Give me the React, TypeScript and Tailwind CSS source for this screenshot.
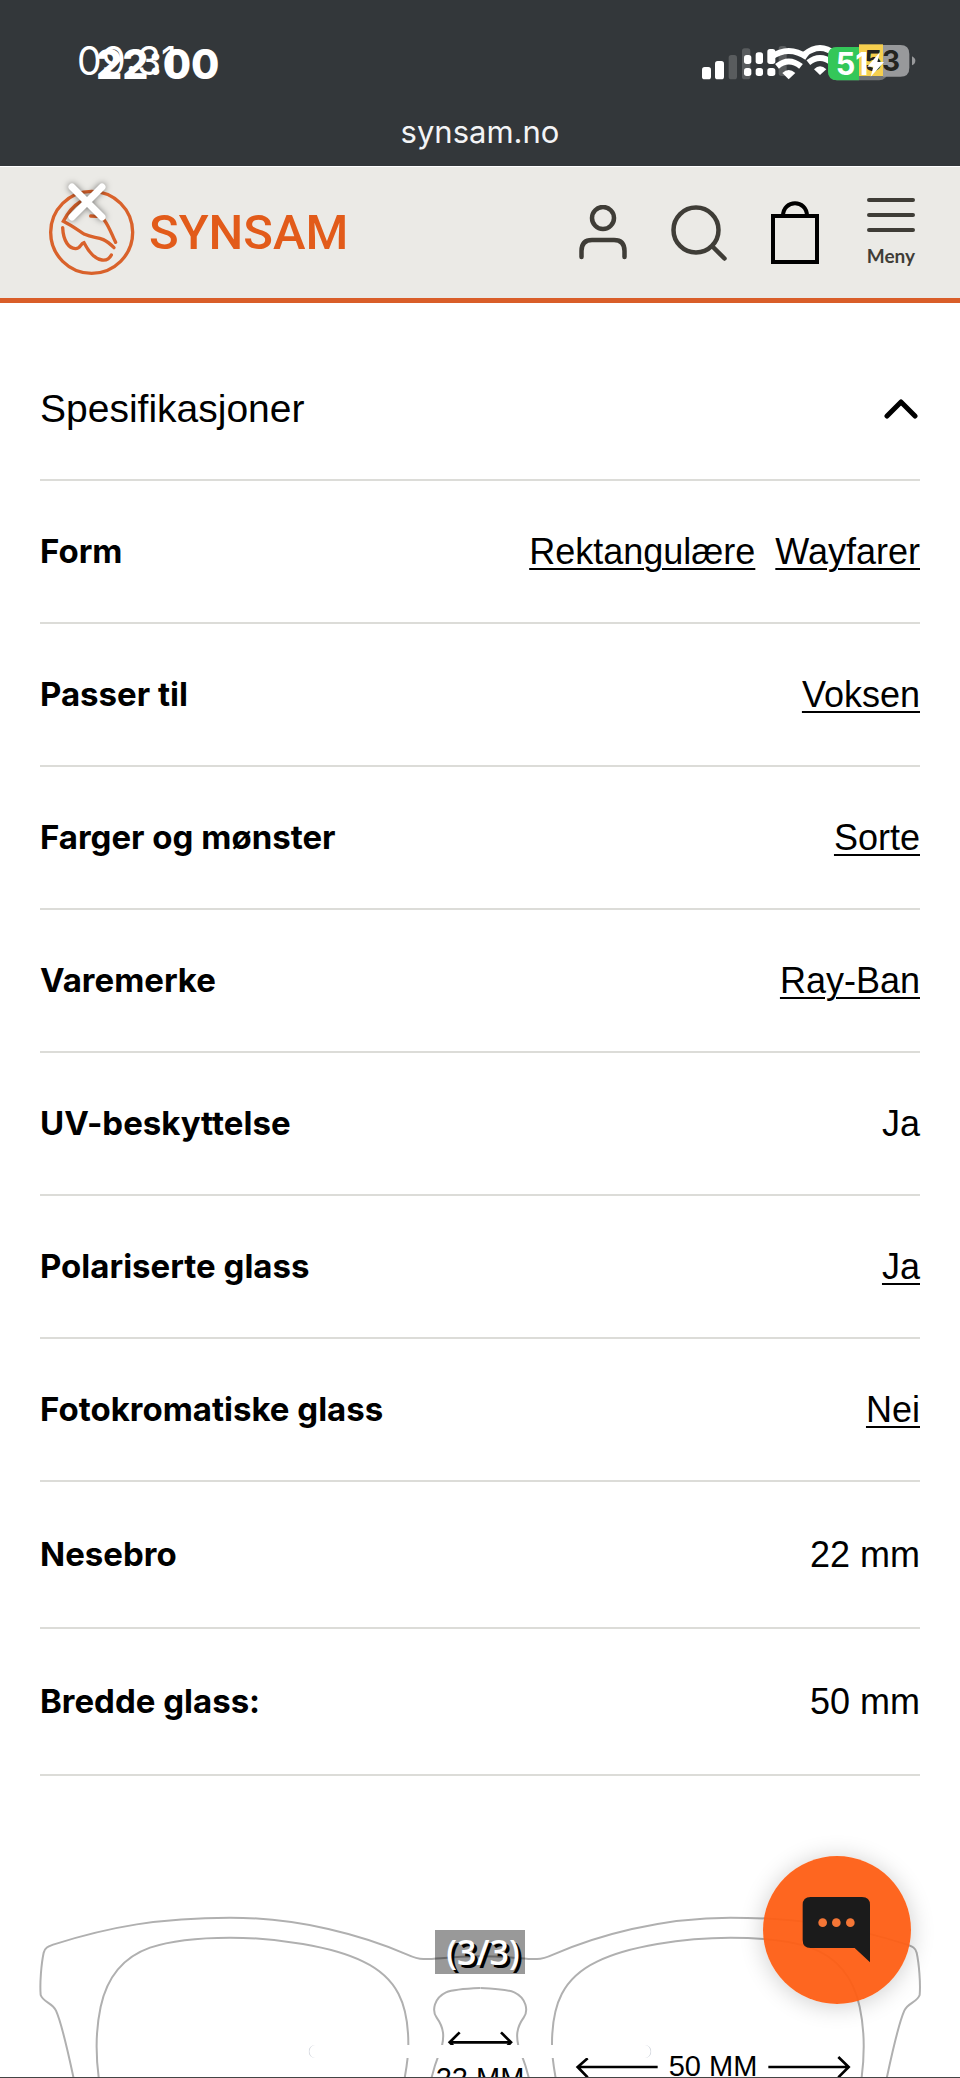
import { useState, type ReactNode } from "react";

type Spec = {
  label: string;
  values: string[];
  link?: boolean;
  tall?: boolean;
};

const specs: Spec[] = [
  { label: "Form", values: ["Rektangulære", "Wayfarer"], link: true },
  { label: "Passer til", values: ["Voksen"], link: true },
  { label: "Farger og mønster", values: ["Sorte"], link: true },
  { label: "Varemerke", values: ["Ray-Ban"], link: true },
  { label: "UV-beskyttelse", values: ["Ja"] },
  { label: "Polariserte glass", values: ["Ja"], link: true },
  { label: "Fotokromatiske glass", values: ["Nei"], link: true },
  { label: "Nesebro", values: ["22 mm"], tall: true },
  { label: "Bredde glass:", values: ["50 mm"], tall: true },
];

function StatusIcons() {
  return (
    <svg className="w-[220px] h-[43px]" viewBox="120 60 660 129" aria-hidden="true">
      {/* Signal */}
      <g fill="#595c5e">
        <rect x="206" y="105" width="25" height="73" rx="8" />
        <rect x="246" y="85" width="25" height="93" rx="8" />
        <rect x="356" y="78" width="24" height="90" rx="8" />
      </g>
      <g fill="#fff">
        <rect x="126" y="141" width="27" height="37" rx="8" />
        <rect x="165" y="123" width="27" height="55" rx="8" />
        <rect x="252" y="105" width="22" height="27" rx="8" />
        <rect x="287" y="97" width="22" height="35" rx="8" />
        <rect x="322" y="87" width="24" height="45" rx="8" />
        <rect x="252" y="144" width="22" height="24" rx="8" />
        <rect x="287" y="144" width="22" height="24" rx="8" />
        <rect x="322" y="144" width="24" height="24" rx="8" />
      </g>

      {/* Wifi */}
      <g fill="none" stroke="#fff" strokeWidth="18">
        <path d="M434 103 Q480 65 526 103" />
        <path d="M445 128 Q480 100 515 128" />
        <path d="M332 112 Q386 74 441 112" />
        <path d="M351 139 Q386 110 423 139" />
      </g>
      <path d="M386 178 L367 159 Q386 141 406 159 Z" fill="#fff" />
      <path d="M480 165 L462 148 Q480 130 499 148 Z" fill="#fff" />

      {/* Batteries */}
      <rect x="504" y="81" width="180" height="100" rx="27" fill="#717375" />
      <path d="M597 81 H531 Q504 81 504 108 V154 Q504 181 531 181 H597 Z" fill="#34c759" />
      <path d="M669 75 H721 Q748 75 748 102 V143 Q748 170 721 170 H669 Z" fill="#98999b" />
      <rect x="597" y="73" width="72" height="95" fill="#f6cf4e" />
      <path d="M756 109 Q766 114 766 122 Q766 131 756 136 Z" fill="#98999b" />
      <text x="612" y="152" fontSize="84" fontWeight="700" fontFamily="Inter, sans-serif" fill="#24241f">
        53
      </text>
      <text x="527" y="165" fontSize="92" fontWeight="700" fontFamily="Inter, sans-serif" fill="#fff">
        51
      </text>
      <path d="M660 96 L622 140 H640 L632 170 L672 126 H652 Z" fill="#fff" />
    </svg>
  );
}

function LogoMark() {
  return (
    <svg className="size-[87px]" viewBox="144 564 261 261" fill="none" stroke="#d9622b" strokeWidth="10" strokeLinecap="round" aria-hidden="true">
      <circle cx="275" cy="694" r="123" />
      <path d="M240 603 C222 614 204 634 190 661 C212 672 232 686 254 700 C288 716 302 700 342 740" />
      <path d="M272 645 L290 646 M312 656 C330 680 336 704 347 724" />
      <path d="M188 680 C190 722 207 742 226 743 C242 744 240 728 252 725 C262 744 280 774 306 777 C322 779 330 770 334 762" />
    </svg>
  );
}

function NavButton({ label, children }: { label: string; children: ReactNode }) {
  return (
    <button type="button" aria-label={label} className="flex cursor-pointer">
      {children}
    </button>
  );
}

function GlassesHalf() {
  return (
    <>
      <path d="M222 720 C203 630 185 550 168 512 C157 487 130 488 122 465 C119 430 124 370 131 338 C135 320 150 318 162 313 C330 260 480 233 690 233 C900 233 1090 287 1220 343 C1240 352 1252 357 1270 357 C1310 358 1340 350 1440 349" />
      <path d="M297 720 C286 640 288 565 302 500 C325 395 385 346 450 323 C520 299 600 293 690 293 C830 293 1000 320 1090 365 C1190 413 1226 490 1225 617 C1225 655 1218 690 1213 720" />
      <path d="M1440 444 C1390 446 1355 450 1338 457 C1302 474 1295 512 1310 533 C1333 565 1332 590 1326 617 C1320 640 1308 655 1293 720" />
    </>
  );
}

function GlassesDiagram() {
  return (
    <svg className="mt-[62px] w-full h-auto shrink-0" viewBox="0 -6 2880 720" role="img" aria-label="Brillemål">
      <g fill="none" stroke="#b0b0b0" strokeWidth="6">
        <GlassesHalf />
        <g transform="translate(2881 0) scale(-1 1)">
          <GlassesHalf />
        </g>
      </g>
      <g fill="none" stroke="#000" strokeWidth="8">
        <path d="M1350 607 H1532 M1379 577 L1349 607 L1379 637 M1503 577 L1533 607 L1503 637" />
        <path d="M1732 681 H1973 M1763 655 L1733 681 L1763 712 M2305 681 H2545 M2515 651 L2546 681 L2515 712" />
      </g>
      <g fill="#000" fontSize="87" fontFamily="'Liberation Sans', Arial, sans-serif" textAnchor="middle">
        <text x="1440" y="745">22 MM</text>
        <text x="2139" y="708">50 MM</text>
      </g>
    </svg>
  );
}

export default function App() {
  const [open, setOpen] = useState(true);

  return (
    <div className="relative flex h-screen flex-col overflow-hidden bg-white text-black font-['Liberation_Sans',Arial,sans-serif]">
      {/* Status bar */}
      <div className="relative shrink-0 bg-[#33373a] pt-10 text-white font-[Inter,sans-serif]">
        <span className="absolute left-[77px] top-[37px] text-[39px] leading-[48px]">09:31</span>
        <span className="absolute left-24 top-10 text-[41px] leading-[48px] font-extrabold">22:00</span>
        <div className="flex justify-end pr-10">
          <StatusIcons />
        </div>
        <p className="pt-[25px] pb-2.5 text-center text-[31px] leading-[48px] text-gray-100">synsam.no</p>
      </div>

      {/* Site header */}
      <header className="flex shrink-0 items-center justify-between border-t border-b-[5px] border-t-white border-b-[#d95e29] bg-[#ebeae6] py-[22px] pr-[45px] pl-12 text-[#3f3d37]">
        <a href="#" aria-label="Synsam" className="flex items-center gap-3.5">
          <LogoMark />
          <span className="text-[49px] leading-none font-medium text-[#e25b1a] font-[Roboto,sans-serif]">SYNSAM</span>
        </a>
        <nav className="flex items-center gap-11">
          <NavButton label="Min side">
            <svg className="w-12 h-[55px]" viewBox="0 0 48 55" fill="none" stroke="currentColor" strokeWidth="4.5" strokeLinecap="round">
              <circle cx="24" cy="13" r="11" />
              <path d="M2.5 52 V46 Q2.5 35 13 35 H35 Q45.5 35 45.5 46 V52" />
            </svg>
          </NavButton>
          <NavButton label="Søk">
            <svg className="size-14" viewBox="0 0 56 56" fill="none" stroke="currentColor" strokeWidth="4.5" strokeLinecap="round">
              <circle cx="25" cy="25" r="22.5" />
              <path d="M42 42 L53.5 53.5" />
            </svg>
          </NavButton>
          <NavButton label="Handlekurv">
            <svg className="w-12 h-[63px]" viewBox="0 0 48 63" fill="none" stroke="#000" strokeWidth="4">
              <rect x="2" y="15" width="44" height="46" />
              <path d="M12 15 C12 -2 36 -2 36 15" />
            </svg>
          </NavButton>
          <button type="button" className="ml-1 flex cursor-pointer flex-col items-center gap-3">
            <svg className="w-12 h-[34px]" viewBox="0 0 48 34" fill="none" stroke="currentColor" strokeWidth="4" strokeLinecap="round" aria-hidden="true">
              <path d="M2 2 H46 M2 17 H46 M2 32 H46" />
            </svg>
            <span className="text-[19px] leading-6 font-bold font-[Lato,sans-serif]">Meny</span>
          </button>
        </nav>
      </header>

      {/* Specifications */}
      <main className="shrink-0 px-10 pt-8">
        <h2 className="border-b-2 border-[#dcdcd8]">
          <button
            type="button"
            aria-expanded={open}
            onClick={() => setOpen(!open)}
            className="flex w-full cursor-pointer items-center justify-between pt-[50px] pb-[46px] pr-0.5 text-[39px] leading-[48px]"
          >
            Spesifikasjoner
            <svg className="w-[34px] h-5" viewBox="0 0 34 20" fill="none" stroke="currentColor" strokeWidth="5" strokeLinecap="round" strokeLinejoin="round" aria-hidden="true">
              <path d="M3 17 L17 3 L31 17" />
            </svg>
          </button>
        </h2>
        {open && (
          <dl>
            {specs.map((spec) => (
              <div
                key={spec.label}
                className={`flex items-center justify-between border-b-2 border-[#dcdcd8] py-12 ${spec.tall ? "leading-[49px]" : "leading-[45px]"}`}
              >
                <dt className="text-[33px] font-bold font-[Inter,sans-serif]">{spec.label}</dt>
                <dd className="flex gap-5 text-[36px]">
                  {spec.values.map((value) =>
                    spec.link ? (
                      <a key={value} href="#" className="underline decoration-2 underline-offset-4">
                        {value}
                      </a>
                    ) : (
                      <span key={value}>{value}</span>
                    )
                  )}
                </dd>
              </div>
            ))}
          </dl>
        )}
      </main>

      <GlassesDiagram />

      {/* Viewer controls on top of the page */}
      <button type="button" aria-label="Lukk" className="absolute left-[66px] top-[181px] cursor-pointer drop-shadow-[0_0_3px_rgba(0,0,0,0.5)]">
        <svg className="size-[42px]" viewBox="0 0 42 42" fill="none" stroke="#fff" strokeWidth="7" strokeLinecap="round">
          <path d="M6 6 L36 36 M36 6 L6 36" />
        </svg>
      </button>
      <div className="absolute bottom-[104px] left-1/2 flex h-11 w-[90px] -translate-x-1/2 items-center justify-center bg-black/40 pl-1.5 text-[34px] text-white font-['Open_Sans',sans-serif] font-semibold [text-shadow:3px_3px_0_#000]">
        (3/3)
      </div>
      <div className="absolute bottom-5 left-1/2 h-[13px] w-[343px] -translate-x-1/2 rounded-full border-x border-gray-300 bg-white"></div>

      {/* Chat */}
      <button
        type="button"
        aria-label="Chat"
        className="absolute right-[49px] bottom-[74px] size-[148px] cursor-pointer rounded-full bg-[#fe5e14]/95 shadow-[0_2px_24px_rgba(0,0,0,0.2)]"
      >
        <svg className="size-[148px]" viewBox="848 47 444 444">
          <path d="M991 170 H1145 Q1169 170 1169 194 V366 L1123 323 H991 Q967 323 967 299 V194 Q967 170 991 170 Z" fill="#1b1b1b" />
          <g fill="#f47636">
            <circle cx="1027" cy="247" r="13" />
            <circle cx="1068" cy="247" r="13" />
            <circle cx="1110" cy="247" r="13" />
          </g>
        </svg>
      </button>
      <div className="absolute inset-x-0 bottom-0 h-px bg-[#444]"></div>
    </div>
  );
}
